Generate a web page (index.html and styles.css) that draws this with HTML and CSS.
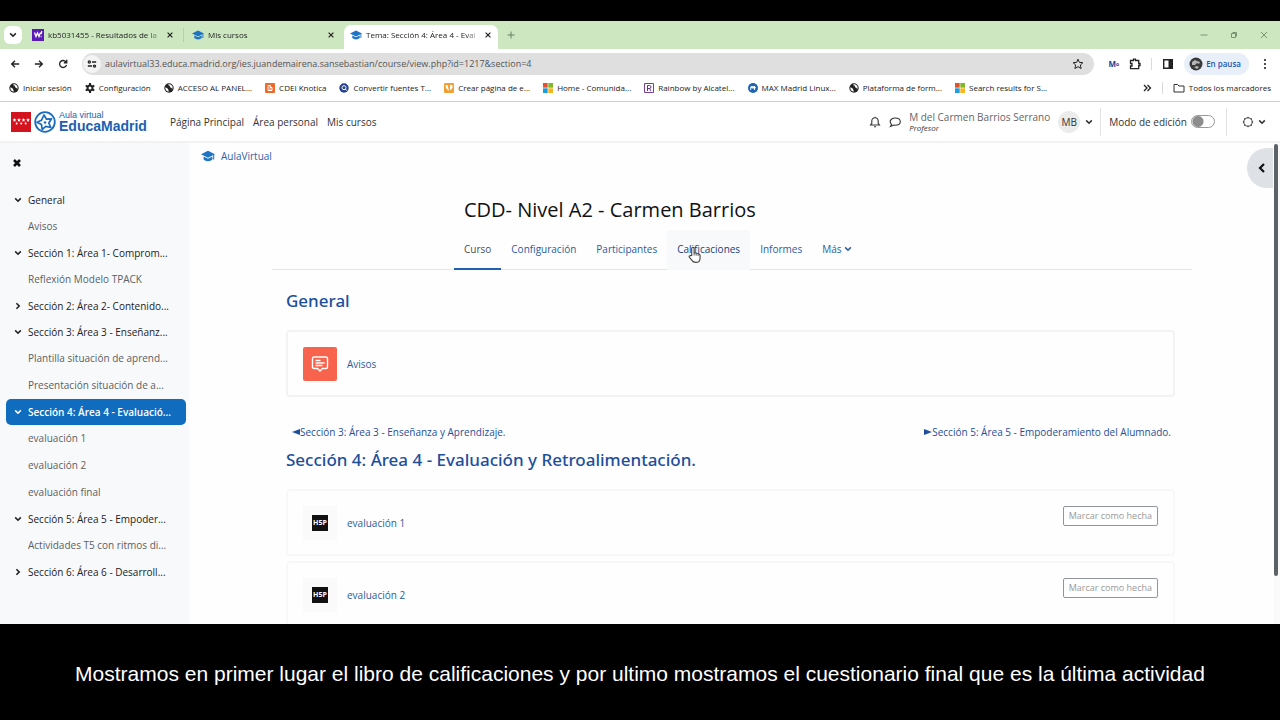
FILE: index.html
```html
<!DOCTYPE html>
<html lang="es">
<head>
    <meta charset="UTF-8" />
    <meta name="viewport" content="width=device-width, initial-scale=1.0" />
    <title>Tema: Sección 4: Área 4 - Evaluación y Retroalimentación</title>
    <link rel="stylesheet" href="styles.css">
</head>
<body>
    <!-- shared icons -->
    <svg class="sprite" aria-hidden="true">
        <symbol id="cap" viewBox="0 0 16 14">
            <path d="M8 1 0 5l8 4 8-4z" fill="#1f74c4"/>
            <path d="M3 7.500v3.500c2.500 2.500 7.500 2.500 10 0V7.500L8 10z" fill="#1f74c4"/>
            <path d="M14.500 5.500V11" stroke="#1f74c4" stroke-width="1.200"/>
        </symbol>
        <symbol id="close" viewBox="0 0 10 10"><path d="M2 2l6 6M8 2l-6 6" stroke="currentColor" stroke-width="1.500" fill="none"/></symbol>
        <symbol id="down" viewBox="0 0 10 10"><path d="M1.500 3l3.500 3.500L8.500 3" stroke="currentColor" stroke-width="2" fill="none"/></symbol>
        <symbol id="right" viewBox="0 0 10 10"><path d="M3 1.500l3.500 3.500L3 8.500" stroke="currentColor" stroke-width="2" fill="none"/></symbol>
        <symbol id="globe" viewBox="0 0 16 16">
            <circle cx="8" cy="8" r="7.500" fill="#222"/>
            <path d="M2 7c2 0 3 1 4 2s1 3 2 4.500c-3 .500-6-2-6-6.500zM7 2c0 2 1 2 2 2.500s0 2.500 2 3 2 2 1.500 3.500C15 8 14 3 9 2z" fill="#fff"/>
        </symbol>
        <symbol id="windows" viewBox="0 0 16 16">
            <path d="M0 0h7.500v7.500H0z" fill="#e8502b"/><path d="M8.500 0H16v7.500H8.500z" fill="#7db928"/>
            <path d="M0 8.500h7.500V16H0z" fill="#1d9ce0"/><path d="M8.500 8.500H16V16H8.500z" fill="#f8b51c"/>
        </symbol>
    </svg>

    <div class="browser">
        <div class="tab-strip">
            <button class="tab-search" aria-label="Buscar pestañas"><svg class="icon-xs"><use href="#down"/></svg></button>
            <div class="tab">
                <svg class="icon-m" viewBox="0 0 12 12"><path d="M0 0h12v12H0z" fill="#5a1ab8"/><path d="M2.500 3.500l1.500 4L5.500 4 7 7.500l1.500-4M9.700 2l-.4 3M8.700 7.500h.8" stroke="#fff" stroke-width="1.300" fill="none"/></svg>
                <span class="tab-title">kb5031455 - Resultados de la</span>
                <button class="tab-close" aria-label="Cerrar"><svg class="icon-xs"><use href="#close"/></svg></button>
            </div>
            <div class="tab divided">
                <svg class="icon-m"><use href="#cap"/></svg>
                <span class="tab-title">Mis cursos</span>
                <button class="tab-close" aria-label="Cerrar"><svg class="icon-xs"><use href="#close"/></svg></button>
            </div>
            <div class="tab active">
                <svg class="icon-m"><use href="#cap"/></svg>
                <span class="tab-title">Tema: Sección 4: Área 4 - Eval</span>
                <button class="tab-close" aria-label="Cerrar"><svg class="icon-xs"><use href="#close"/></svg></button>
            </div>
            <button class="new-tab" aria-label="Nueva pestaña"><svg class="icon-s" viewBox="0 0 10 10"><path d="M5 1.500v7M1.500 5h7" stroke="currentColor"/></svg></button>
            <div class="window-controls">
                <button aria-label="Minimizar"><svg class="icon-s" viewBox="0 0 10 10"><path d="M1.500 5h7" stroke="currentColor"/></svg></button>
                <button aria-label="Restaurar"><svg class="icon-s" viewBox="0 0 10 10"><path d="M2.500 3.500h4v4h-4zM3.500 2.500h4v4" stroke="currentColor" fill="none"/></svg></button>
                <button aria-label="Cerrar ventana"><svg class="icon-s" viewBox="0 0 10 10"><path d="M2 2l6 6M8 2l-6 6" stroke="currentColor"/></svg></button>
            </div>
        </div>

        <div class="toolbar">
            <button aria-label="Atrás"><svg class="icon-s" viewBox="0 0 12 12"><path d="M11 6H2.500M6 2L2 6l4 4" stroke="currentColor" stroke-width="1.600" fill="none"/></svg></button>
            <button aria-label="Adelante"><svg class="icon-s" viewBox="0 0 12 12"><path d="M1 6h8.500M6 2l4 4-4 4" stroke="currentColor" stroke-width="1.600" fill="none"/></svg></button>
            <button aria-label="Recargar"><svg class="icon-s" viewBox="0 0 12 12"><path d="M9.500 3.500A4.200 4.200 0 1 0 10.200 7M10.500 1v3.500H7" stroke="currentColor" stroke-width="1.600" fill="none"/></svg></button>
            <div class="address">
                <button class="site-info" aria-label="Información del sitio"><svg class="icon-s" viewBox="0 0 12 12"><path d="M6 3.500h5M1 8.500h5" stroke="currentColor" stroke-width="1.800"/><circle cx="2.800" cy="3.500" r="1.300" fill="none" stroke="currentColor" stroke-width="1.500"/><circle cx="9" cy="8.500" r="1.300" fill="none" stroke="currentColor" stroke-width="1.500"/></svg></button>
                <input type="text" aria-label="Dirección" spellcheck="false" value="aulavirtual33.educa.madrid.org/ies.juandemairena.sansebastian/course/view.php?id=1217&amp;section=4">
                <button aria-label="Añadir a marcadores"><svg class="icon-m" viewBox="0 0 12 12"><path d="M6 1.200l1.400 3.200 3.500.3-2.600 2.300.8 3.500L6 8.700l-3.100 1.800.8-3.500L1.100 4.700l3.500-.3z" fill="none" stroke="currentColor"/></svg></button>
            </div>
            <div class="extensions">
                <button class="ext-m" aria-label="Extensión">M<sup>o</sup></button>
                <button aria-label="Extensiones"><svg class="icon-m" viewBox="0 0 12 12"><path d="M1.500 2.500H4.500V1.200h2v1.300h3.200v3h1.300v2H9.700v3.200H1.500V8H3V5.500H1.500z" fill="none" stroke="currentColor" stroke-width="1.300"/></svg></button>
                <span class="bar"></span>
                <button aria-label="Panel lateral"><svg class="icon-m" viewBox="0 0 12 12"><path d="M1.700 1.700h8.600v8.600H1.700z" fill="none" stroke="currentColor" stroke-width="1.400"/><path d="M6.500 1h4.500v10H6.500z" fill="currentColor"/></svg></button>
                <button class="profile">
                    <svg class="icon-l" viewBox="0 0 14 14"><circle cx="7" cy="7" r="6.500" fill="#3a3a3a"/><path d="M3 5l3-2 2 1 3 1-1 2-2-1-2 2-3 0zM5 10l3-1 2 1-2 2z" fill="#b5b5b5"/></svg>
                    En pausa
                </button>
                <button aria-label="Menú"><svg class="icon-m" viewBox="0 0 12 12"><g fill="currentColor"><circle cx="6" cy="2" r="1.100"/><circle cx="6" cy="6" r="1.100"/><circle cx="6" cy="10" r="1.100"/></g></svg></button>
            </div>
        </div>

        <div class="bookmarks">
            <a href="#"><svg class="icon-s"><use href="#globe"/></svg>Iniciar sesión</a>
            <a href="#"><svg class="icon-s" viewBox="0 0 10 10"><circle cx="5" cy="5" r="2.500" fill="none" stroke="#222" stroke-width="2"/><path d="M5 0v2M5 8v2M.7 2.500l1.700 1M7.600 6.500l1.700 1M.7 7.500l1.700-1M7.600 3.500l1.700-1" stroke="#222" stroke-width="2"/></svg>Configuración</a>
            <a href="#"><svg class="icon-s"><use href="#globe"/></svg>ACCESO AL PANEL...</a>
            <a href="#"><svg class="icon-s" viewBox="0 0 10 10"><rect width="10" height="10" rx="1" fill="#f0692a"/><path d="M3 2.500h2.500v2H7v3H3zM4.300 4h.8M4.300 6h1.500" fill="none" stroke="#fff"/></svg>CDEI Knotica</a>
            <a href="#"><svg class="icon-s" viewBox="0 0 10 10"><circle cx="5" cy="5" r="4.700" fill="#25418f"/><circle cx="5" cy="4.700" r="2" fill="none" stroke="#fff"/><path d="M6.500 6l1 1.500" stroke="#fff"/></svg>Convertir fuentes T...</a>
            <a href="#"><svg class="icon-s" viewBox="0 0 10 10"><rect width="10" height="10" rx="1" fill="#f3a032"/><path d="M1.500 2h2l1 4 .5 2-3-3zM6 2h2.500v3L6 7.500z" fill="#fff"/></svg>Crear página de e...</a>
            <a href="#"><svg class="icon-s"><use href="#windows"/></svg>Home - Comunida...</a>
            <a href="#"><svg class="icon-s" viewBox="0 0 10 10"><path d="M.5.500h9v9h-9z" fill="#fff" stroke="#7b3f99"/><path d="M3.500 8V2.500h2q1.500 0 1.500 1.500T5.500 5.500h-2M5.500 5.500L7 8" fill="none" stroke="#6a2c8e"/></svg>Rainbow by Alcatel...</a>
            <a href="#"><svg class="icon-s" viewBox="0 0 10 10"><circle cx="5" cy="5" r="5" fill="#1e64b4"/><path d="M2.500 7l1-4 1.500 2.500L6.500 3v4M2 5q3-3 6 0" stroke="#fff" fill="none"/></svg>MAX Madrid Linux...</a>
            <a href="#"><svg class="icon-s"><use href="#globe"/></svg>Plataforma de form...</a>
            <a href="#"><svg class="icon-s"><use href="#windows"/></svg>Search results for S...</a>
            <div class="bookmarks-end">
                <button aria-label="Más marcadores"><svg class="icon-s" viewBox="0 0 10 10"><path d="M2 2l3 3-3 3M5.500 2l3 3-3 3" stroke="currentColor" stroke-width="1.300" fill="none"/></svg></button>
                <span class="bar"></span>
                <a href="#"><svg class="icon-m" viewBox="0 0 12 12"><path d="M1 2.500h3.500l1.500 1.500h5v6H1z" fill="none" stroke="#333"/></svg>Todos los marcadores</a>
            </div>
        </div>

        <header class="site-header">
            <a class="brand" href="#">
                <svg class="brand-flag" viewBox="0 0 20 20"><path d="M0 0h20v20H0z" fill="#d3131d"/><g fill="#fff"><path d="M3.500 6l.6 1.300 1.300.1-1 .9.300 1.400-1.200-.8-1.200.8.300-1.400-1-.9 1.300-.1zM8 6l.6 1.300 1.300.1-1 .9.300 1.400-1.200-.8-1.200.8.300-1.400-1-.9 1.300-.1zM12.500 6l.6 1.300 1.300.1-1 .9.300 1.400-1.200-.8-1.200.8.300-1.400-1-.9 1.300-.1zM17 6l.6 1.300 1.300.1-1 .9.300 1.400-1.200-.8-1.200.8.300-1.400-1-.9 1.300-.1z"/><circle cx="5.700" cy="11.500" r="1"/><circle cx="10.200" cy="11.500" r="1"/><circle cx="14.700" cy="11.500" r="1"/></g></svg>
                <svg class="brand-star" viewBox="0 0 22 22"><circle cx="11" cy="11" r="9.800" fill="none" stroke="#1a6cc0" stroke-width="1.800"/><path d="M10 4l2.500 4.200 5-.4-2.700 4.200 2 4.500-5-1.100-3.700 3.100-.6-4.900L3 11.200l4.500-2z" fill="none" stroke="#1a6cc0" stroke-width="1.700" stroke-linejoin="round"/><circle cx="11" cy="11.500" r="1.300" fill="#1a6cc0"/></svg>
                <span class="brand-text"><span>Aula virtual</span><strong>EducaMadrid</strong></span>
            </a>
            <nav class="site-nav">
                <a href="#">Página Principal</a>
                <a href="#">Área personal</a>
                <a href="#">Mis cursos</a>
            </nav>
            <div class="user-area">
                <button aria-label="Notificaciones"><svg class="icon-m" viewBox="0 0 12 12"><path d="M1.500 9h9L9.200 7.200V5a3.200 3.200 0 0 0-6.400 0v2.200zM5 10.800h2M6 .700v1" fill="none" stroke="currentColor" stroke-width="1.100"/></svg></button>
                <button aria-label="Mensajes"><svg class="icon-m" viewBox="0 0 12 12"><path d="M2.600 8.500C-.5 5.500 2 2 6 2s5.300 2 5.300 3.700S9.500 9.200 6 9.200L5 9.100 1.500 10.500z" fill="none" stroke="currentColor" stroke-width="1.100"/></svg></button>
                <div class="user-name"><span>M del Carmen Barrios Serrano</span><em>Profesor</em></div>
                <button class="user-menu"><span class="avatar">MB</span><svg class="icon-xs"><use href="#down"/></svg></button>
            </div>
            <div class="edit-mode">
                <label for="edit-mode">Modo de edición</label>
                <input type="checkbox" id="edit-mode">
            </div>
            <button class="theme" aria-label="Tema"><svg class="icon-m" viewBox="0 0 12 12"><circle cx="6" cy="6" r="4.200" fill="none" stroke="currentColor"/><path d="M6 .800v1M6 10.200v1M.8 6h1M10.200 6h1M2.100 2.100l.7.700M9.200 9.200l.7.700M2.100 9.900l.7-.7M9.200 2.800l.7-.7" stroke="currentColor"/></svg><svg class="icon-xs"><use href="#down"/></svg></button>
        </header>

        <div class="page">
            <nav class="course-index">
                <button class="drawer-close" aria-label="Cerrar índice"><svg class="icon-s" viewBox="0 0 10 10"><path d="M2 2l6 6M8 2l-6 6" stroke="currentColor" stroke-width="2.600"/></svg></button>
                <div class="index-section"><svg class="icon-xs"><use href="#down"/></svg><a href="#">General</a></div>
                <a class="index-item" href="#">Avisos</a>
                <div class="index-section"><svg class="icon-xs"><use href="#down"/></svg><a href="#">Sección 1: Área 1- Comprom...</a></div>
                <a class="index-item" href="#">Reflexión Modelo TPACK</a>
                <div class="index-section"><svg class="icon-xs"><use href="#right"/></svg><a href="#">Sección 2: Área 2- Contenido...</a></div>
                <div class="index-section"><svg class="icon-xs"><use href="#down"/></svg><a href="#">Sección 3: Área 3 - Enseñanz...</a></div>
                <a class="index-item" href="#">Plantilla situación de aprend...</a>
                <a class="index-item" href="#">Presentación situación de a...</a>
                <div class="index-section current"><svg class="icon-xs"><use href="#down"/></svg><a href="#">Sección 4: Área 4 - Evaluació...</a></div>
                <a class="index-item" href="#">evaluación 1</a>
                <a class="index-item" href="#">evaluación 2</a>
                <a class="index-item" href="#">evaluación final</a>
                <div class="index-section"><svg class="icon-xs"><use href="#down"/></svg><a href="#">Sección 5: Área 5 - Empoder...</a></div>
                <a class="index-item" href="#">Actividades T5 con ritmos di...</a>
                <div class="index-section"><svg class="icon-xs"><use href="#right"/></svg><a href="#">Sección 6: Área 6 - Desarroll...</a></div>
            </nav>

            <main class="content">
                <a class="breadcrumb" href="#"><svg class="icon-l"><use href="#cap"/></svg>AulaVirtual</a>
                <button class="drawer-open" aria-label="Abrir bloques"><svg class="icon-m" viewBox="0 0 12 12"><path d="M8 2L4 6l4 4" fill="none" stroke="currentColor" stroke-width="2.200"/></svg></button>

                <div class="course">
                    <div class="course-head">
                        <div class="course-head-inner">
                            <h1>CDD- Nivel A2 - Carmen Barrios</h1>
                            <nav class="course-tabs">
                                <a class="selected" href="#">Curso</a>
                                <a href="#">Configuración</a>
                                <a href="#">Participantes</a>
                                <a class="hovered" href="#">Calificaciones
                                    <svg class="pointer" viewBox="0 0 14 19"><path d="M4 10V2.500a1.300 1.300 0 0 1 2.600 0V7l5 1.200q1.400.5 1.400 2V13q0 4.500-4.500 4.500-3 0-4.500-2.500L1.200 11.500q0-1.500 1.500-1.300z" fill="#fff" stroke="#444" stroke-width="1.200"/><path d="M6.600 7v3M8.800 7.600v2.600M11 8.200v2.300" stroke="#444" fill="none"/></svg>
                                </a>
                                <a href="#">Informes</a>
                                <a href="#">Más <svg class="icon-xs"><use href="#down"/></svg></a>
                            </nav>
                        </div>
                    </div>

                    <div class="sections">
                        <h2>General</h2>
                        <div class="activity outlined">
                            <span class="activity-icon forum"><svg viewBox="0 0 18 18"><path d="M3 2h12q1.500 0 1.500 1.500v8.500q0 1.500-1.500 1.500h-3.500L9 16l-2.500-2.500H3Q1.500 13.500 1.500 12V3.500Q1.500 2 3 2zM4.500 5.500h5M4.500 8h9M4.500 10.500h7" fill="none" stroke="#fff" stroke-width="1.400"/></svg></span>
                            <a href="#">Avisos</a>
                        </div>

                        <nav class="section-nav">
                            <a href="#"><svg class="icon-xs" viewBox="0 0 8 8"><path d="M8 1v6L0 4z" fill="currentColor"/></svg>Sección 3: Área 3 - Enseñanza y Aprendizaje.</a>
                            <a href="#"><svg class="icon-xs" viewBox="0 0 8 8"><path d="M0 1v6l8-3z" fill="currentColor"/></svg>Sección 5: Área 5 - Empoderamiento del Alumnado.</a>
                        </nav>
                        <h2>Sección 4: Área 4 - Evaluación y Retroalimentación.</h2>
                        <div class="activity">
                            <span class="activity-icon"><span class="h5p">H5P</span></span>
                            <a href="#">evaluación 1</a>
                            <button class="mark-done">Marcar como hecha</button>
                        </div>
                        <div class="activity">
                            <span class="activity-icon"><span class="h5p">H5P</span></span>
                            <a href="#">evaluación 2</a>
                            <button class="mark-done">Marcar como hecha</button>
                        </div>
                    </div>
                </div>
            </main>
            <div class="scrollbar"><div class="scroll-thumb"></div></div>
        </div>
    </div>

    <p class="caption">Mostramos en primer lugar el libro de calificaciones y por ultimo mostramos el cuestionario final que es la última actividad</p>
</body>
</html>
```
FILE: styles.css
```css
* {
    box-sizing: border-box;
}

body {
    display: flex;
    flex-direction: column;
    height: 100vh;
    margin: 0;
    padding-top: 21px;
    background: #000;
    color: #222;
    font-family: "Open Sans", "Noto Sans", sans-serif;
    font-size: 10px;
    line-height: 14px;
    overflow: hidden;
}

a {
    color: inherit;
    text-decoration: none;
}

button {
    display: flex;
    align-items: center;
    justify-content: center;
    padding: 0;
    border: none;
    background: transparent;
    color: inherit;
    font: inherit;
    cursor: pointer;
}

svg {
    flex: none;
}

.sprite {
    position: absolute;
    width: 0;
    height: 0;
}

.icon-xs {
    width: 8px;
    height: 8px;
}

.icon-s {
    width: 10px;
    height: 10px;
}

.icon-m {
    width: 12px;
    height: 12px;
}

.icon-l {
    width: 14px;
    height: 14px;
}

.browser {
    display: flex;
    flex-direction: column;
    flex: 1;
    min-height: 0;
    background: #fefefe;
    overflow: hidden;
}

/* browser window */

.tab-strip {
    display: flex;
    align-items: center;
    height: 28px;
    flex: none;
    background: #cde7c1;
    font-size: 8px;
}

.tab-search {
    width: 18px;
    height: 18px;
    margin: 0 2px 0 4px;
    border-radius: 6px;
    background: #fff;
}

.tab {
    display: flex;
    align-items: center;
    gap: 4px;
    width: 159px;
    padding: 0 9px 0 8px;
}

.tab.divided {
    width: 161px;
    border-left: 1px solid #b3d3a6;
}

.tab.active {
    width: 154px;
    height: 24px;
    padding: 0 6px 4px;
    border-radius: 7px 7px 0 0;
    background: #fff;
    align-self: flex-end;
}

.tab-title {
    flex: 1;
    overflow: hidden;
    white-space: nowrap;
    -webkit-mask-image: linear-gradient(to right, #000 88%, transparent);
    mask-image: linear-gradient(to right, #000 88%, transparent);
}

.new-tab {
    width: 26px;
    color: #6b7c65;
}

.window-controls {
    display: flex;
    gap: 20px;
    margin-left: auto;
    padding-right: 11px;
    color: #7b9272;
}

.toolbar {
    display: flex;
    align-items: center;
    gap: 14px;
    height: 29px;
    flex: none;
    padding: 0 9px 0 10px;
    background: #fff;
}

.address {
    display: flex;
    align-items: center;
    flex: 1;
    gap: 4px;
    height: 22px;
    padding: 0 10px 0 1px;
    border-radius: 11px;
    background: #dfdfdf;
}

.site-info {
    width: 18px;
    height: 18px;
    border-radius: 9px;
    background: #f3f3f3;
}

.address input {
    flex: 1;
    padding: 0;
    border: none;
    outline: none;
    background: transparent;
    color: #555;
    font: inherit;
    font-size: 9px;
}

.extensions {
    display: flex;
    align-items: center;
    gap: 10px;
}

.bar {
    width: 1px;
    height: 12px;
    background: #d8ddd8;
}

.ext-m {
    color: #1d3c8f;
    font-size: 8px;
    font-weight: 700;
    line-height: 8px;
}

.ext-m sup {
    font-size: 5px;
}

.profile {
    gap: 3px;
    height: 22px;
    padding: 0 8px 0 5px;
    border-radius: 11px;
    background: #e9eff8;
    color: #1b57b5;
    font-size: 8px;
    font-weight: 600;
}

.bookmarks {
    display: flex;
    align-items: center;
    gap: 13px;
    height: 24px;
    flex: none;
    padding: 0 9px 3px;
    border-bottom: 1px solid #cfcfcf;
    background: #fff;
    font-size: 8px;
    font-weight: 500;
    white-space: nowrap;
}

.bookmarks a {
    display: flex;
    align-items: center;
    gap: 4px;
}

.bookmarks-end {
    display: flex;
    align-items: center;
    gap: 10px;
    margin-left: auto;
}

/* site header */

.site-header {
    display: flex;
    align-items: center;
    height: 41px;
    flex: none;
    padding: 0 14px 0 11px;
    border-bottom: 2px solid #f2f2f2;
    background: #fff;
    color: #333;
}

.brand {
    display: flex;
    align-items: center;
    gap: 3px;
    color: #1a5fb4;
    font-family: "Liberation Sans", Arial, sans-serif;
}

.brand-flag {
    width: 20px;
    height: 20px;
}

.brand-star {
    width: 22px;
    height: 22px;
}

.brand-text {
    display: flex;
    flex-direction: column;
    font-size: 9px;
    line-height: 10px;
}

.brand-text strong {
    font-size: 14px;
    line-height: 13px;
}

.site-nav {
    display: flex;
    gap: 9px;
    margin-left: 23px;
}

.user-area {
    display: flex;
    align-items: center;
    gap: 8px;
    margin-left: auto;
}

.user-name {
    display: flex;
    flex-direction: column;
    color: #666;
    line-height: 11px;
}

.user-name em {
    color: #333;
    font-size: 8px;
    line-height: 9px;
}

.user-menu {
    gap: 5px;
    height: 28px;
    padding-right: 7px;
    border-right: 1px solid #e3e3e3;
}

.avatar {
    width: 22px;
    border-radius: 11px;
    background: #ececec;
    line-height: 22px;
}

.edit-mode {
    display: flex;
    align-items: center;
    gap: 4px;
    height: 28px;
    padding: 0 11px 0 8px;
    border-right: 1px solid #e3e3e3;
}

.edit-mode input {
    appearance: none;
    width: 24px;
    height: 13px;
    margin: 0;
    border: 1px solid #999;
    border-radius: 7px;
    background: radial-gradient(circle at 6px 50%, #8c8c8c 5px, transparent 6px) #fff;
}

.theme {
    gap: 4px;
    margin-left: 15px;
}

/* page body */

.page {
    display: flex;
    flex: 1;
    min-height: 0;
}

.course-index {
    width: 190px;
    flex: none;
    padding: 6px 2px 0 6px;
    background: #f8f9fb;
    border-right: 2px solid #fafbfc;
    white-space: nowrap;
    overflow: hidden;
}

.drawer-close {
    width: 22px;
    height: 27px;
    margin-bottom: 11px;
    color: #111;
}

.index-section {
    display: flex;
    align-items: center;
    gap: 6px;
    height: 26px;
    padding-left: 8px;
    border-radius: 5px;
    font-weight: 500;
}

.index-section.current {
    background: #0f6cbf;
    color: #fff;
    font-weight: 600;
}

.index-item {
    display: block;
    padding-left: 22px;
    color: #5a5f64;
    line-height: 27px;
}

.content {
    position: relative;
    flex: 1;
    min-width: 0;
    overflow: hidden;
}

.breadcrumb {
    display: flex;
    align-items: center;
    gap: 6px;
    padding: 6px 11px 0;
    color: #2c63a8;
}

.drawer-open {
    position: absolute;
    top: 5px;
    right: 1px;
    width: 26px;
    height: 40px;
    padding-left: 4px;
    border-radius: 20px 0 0 20px;
    background: #dee2e6;
    color: #111;
}

.course {
    max-width: 920px;
    margin: 0 auto;
}

.course-head {
    padding-top: 33px;
    border-bottom: 1px solid #e3e5e8;
}

.course-head-inner {
    max-width: 556px;
    margin: 0 auto;
}

h1 {
    margin: 0 10px 6px;
    color: #111;
    font-size: 20px;
    font-weight: 500;
    line-height: 28px;
}

.course-tabs {
    display: flex;
    margin-bottom: -1px;
    color: #2a5ca0;
}

.course-tabs a {
    position: relative;
    padding: 0 10px;
    border-bottom: 2px solid transparent;
    line-height: 38px;
}

.course-tabs .selected {
    border-bottom-color: #2160ae;
    color: #495057;
}

.course-tabs .hovered {
    background: #f8f9fa;
    color: #1d3c78;
}

/* mouse pointer over the hovered tab */
.pointer {
    position: absolute;
    top: 16px;
    left: 21px;
    width: 13px;
    height: 18px;
}

.sections {
    padding: 18px 17px 0 14px;
}

h2 {
    margin: 0 0 16px;
    color: #1d4f9c;
    font-family: "Noto Sans", "Open Sans", sans-serif;
    font-size: 17px;
    font-weight: 500;
    line-height: 26px;
}

.activity {
    display: flex;
    align-items: center;
    gap: 10px;
    height: 67px;
    margin-bottom: 5px;
    padding: 0 15px;
    border: 2px solid #f8f8f9;
    border-radius: 4px;
    color: #2a5ca0;
}

.activity.outlined {
    border-color: #f3f3f4;
}

.activity-icon {
    display: flex;
    align-items: center;
    justify-content: center;
    width: 34px;
    height: 34px;
    background: #fafafa;
}

.activity-icon.forum {
    border-radius: 2px;
    background: #f7634d;
}

.activity-icon svg {
    width: 18px;
    height: 18px;
}

.h5p {
    width: 16px;
    background: #111;
    color: #fff;
    font-size: 7px;
    font-weight: 700;
    line-height: 16px;
    text-align: center;
}

.mark-done {
    align-self: flex-start;
    height: 20px;
    margin: 15px 0 0 auto;
    padding: 0 5px;
    border: 1px solid #8f959b;
    border-radius: 2px;
    color: #9a9a9a;
    font-size: 9px;
}

.section-nav {
    display: flex;
    justify-content: space-between;
    margin: 28px 4px 8px 6px;
    color: #1d4f9c;
}

.scrollbar {
    width: 6px;
    flex: none;
    padding: 1px 2px 0 0;
    background: #fafafa;
}

.scroll-thumb {
    height: 90%;
    border-radius: 3px;
    background: #5c6266;
}

.caption {
    flex: none;
    margin: 0;
    padding: 38px 20px 34px;
    color: #fff;
    font-family: "Liberation Sans", Arial, sans-serif;
    font-size: 21px;
    line-height: 24px;
    text-align: center;
}
```
